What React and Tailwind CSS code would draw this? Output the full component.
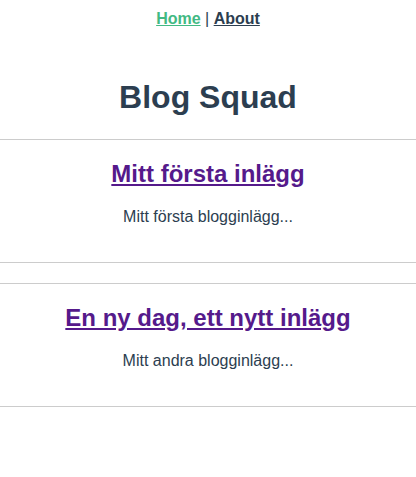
const posts = [
  { id: 1, title: 'Mitt första inlägg', excerpt: 'Mitt första blogginlägg...' },
  { id: 2, title: 'En ny dag, ett nytt inlägg', excerpt: 'Mitt andra blogginlägg...' },
];

const App = () => {
  return (
    <div className="min-h-[477px] bg-white text-center text-[#2c3e50] font-['Liberation_Sans',Arial,sans-serif]">
      <nav className="pt-[10px] text-[16px] leading-[18px]">
        <a href="#" className="font-bold text-[#42b983] underline">Home</a>
        <span> | </span>
        <a href="#" className="font-bold text-[#2c3e50] underline">About</a>
      </nav>
      <h1 className="mt-[51px] text-[32px] leading-[37px] font-bold">Blog Squad</h1>
      <div className="mt-[23px]">
        {posts.map((p, i) => (
          <div key={p.id} className={i > 0 ? 'mt-[20px]' : ''}>
            <hr className="border-0 border-t border-[#cccccc]" />
            <h2 className="mt-[20px] text-[24px] leading-[28px] font-bold">
              <a href="#" className="text-[#551a8b] underline">{p.title}</a>
            </h2>
            <p className="mt-[20px] text-[16px] leading-[18px]">{p.excerpt}</p>
            <hr className="mt-[36px] border-0 border-t border-[#cccccc]" />
          </div>
        ))}
      </div>
    </div>
  );
};

export default App;
